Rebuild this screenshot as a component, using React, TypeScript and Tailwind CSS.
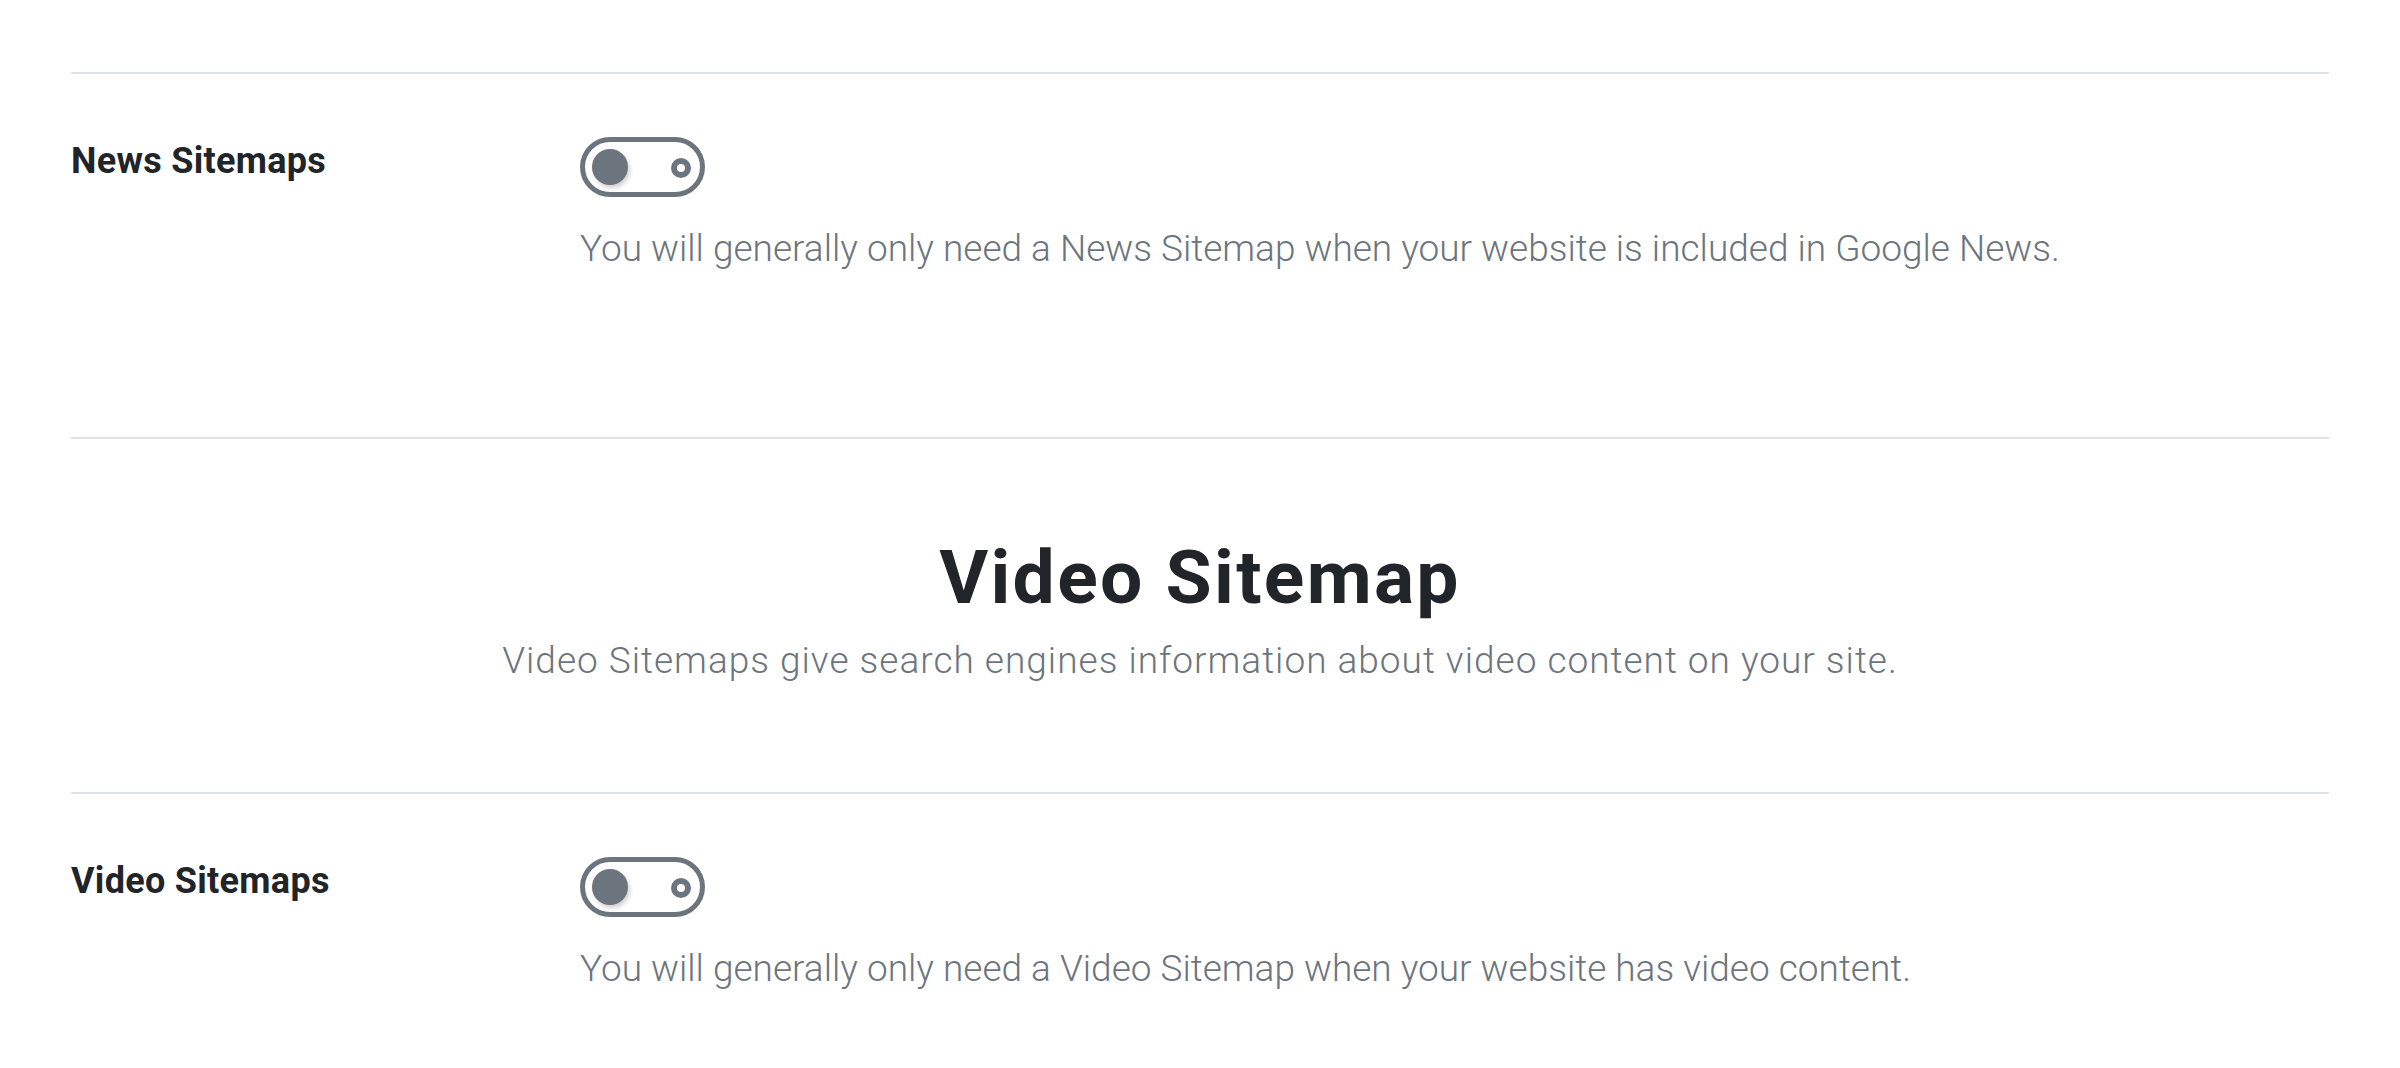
import React from "react";

function Toggle() {
  return (
    <div className="relative h-[60px] w-[125px] rounded-full border-[5px] border-[#6c757d] bg-white">
      <div className="absolute left-[7px] top-[7px] h-[36px] w-[36px] rounded-full bg-[#6c757d] shadow-[2px_3px_4px_rgba(0,0,0,0.18)]" />
      <div className="absolute right-[9px] top-[15.5px] h-[20px] w-[20px] rounded-full border-[6.5px] border-[#6c757d] bg-white" />
    </div>
  );
}

function Row({ label, desc, height }: { label: string; desc: string; height: string }) {
  return (
    <div className={`flex border-t-2 border-[#dee2e6] ${height}`}>
      <div className="w-[509px] shrink-0 pt-[60px] text-[36px] font-bold leading-[54px] tracking-[0.3px] text-[#212529]">
        {label}
      </div>
      <div className="flex flex-col pt-[63px]">
        <Toggle />
        <p className="mt-[25px] text-[37px] font-light leading-[54px] text-[#6c757d]">{desc}</p>
      </div>
    </div>
  );
}

export default function App() {
  return (
    <div
      className="min-h-screen bg-white px-[71px] pt-[72px]"
      style={{ fontFamily: "Roboto, 'Liberation Sans', sans-serif" }}
    >
      <Row
        label="News Sitemaps"
        desc="You will generally only need a News Sitemap when your website is included in Google News."
        height="h-[365px]"
      />
      <div className="h-[355px] border-t-2 border-[#dee2e6] pt-[93px] text-center">
        <h2 className="text-[75px] font-bold leading-[90px] tracking-[2.3px] text-[#212529]">Video Sitemap</h2>
        <p className="mt-[12px] text-[37px] font-light leading-[54px] tracking-[1px] text-[#6c757d]">
          Video Sitemaps give search engines information about video content on your site.
        </p>
      </div>
      <Row
        label="Video Sitemaps"
        desc="You will generally only need a Video Sitemap when your website has video content."
        height="h-[276px]"
      />
    </div>
  );
}
